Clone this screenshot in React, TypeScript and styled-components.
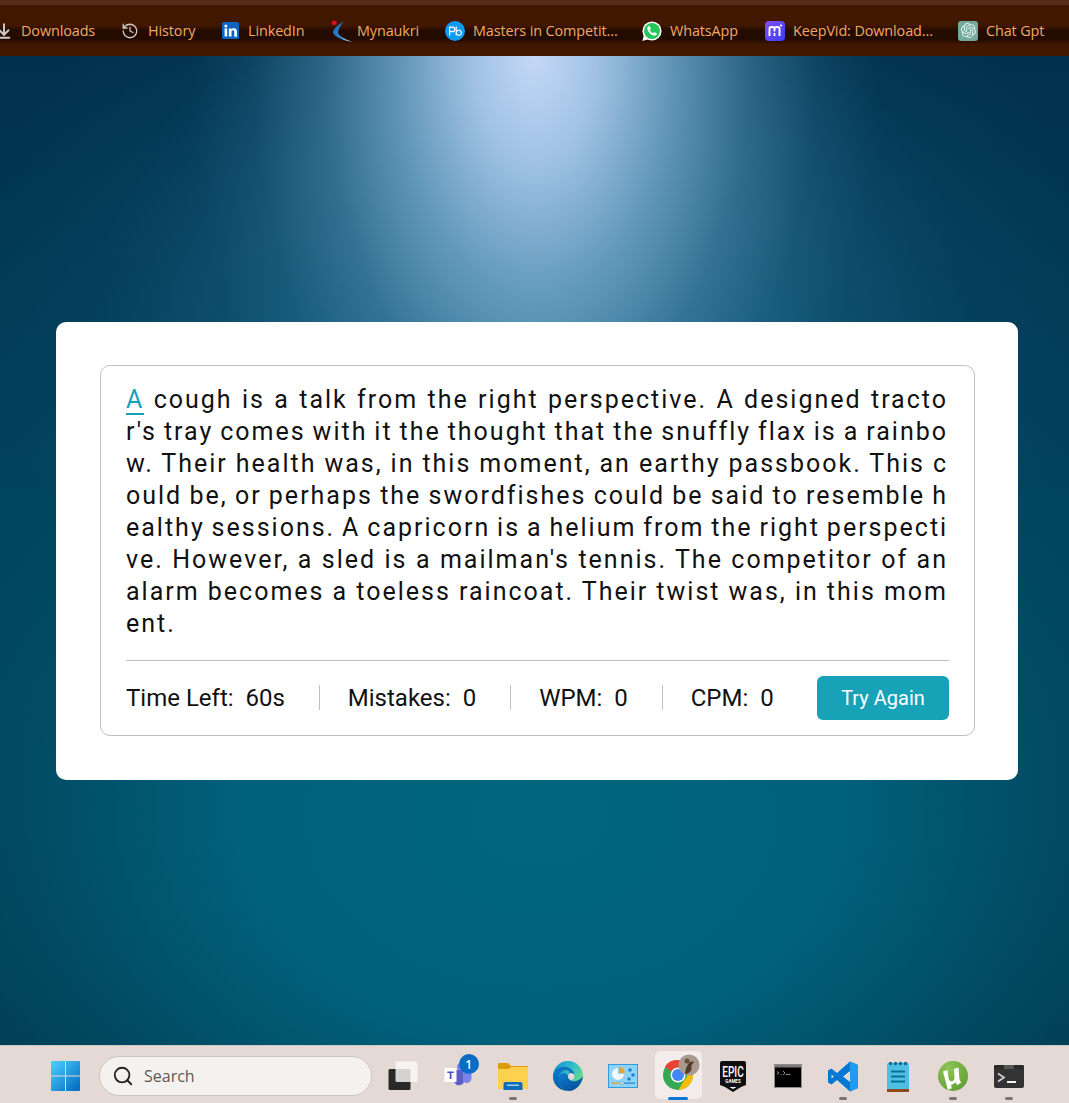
import React from "react";
import styled, { createGlobalStyle } from "styled-components";
import { SiOpenai } from "react-icons/si";
import { History, ArrowDownToLine, Search } from "lucide-react";

const GlobalStyle = createGlobalStyle`
  html, body { margin: 0; padding: 0; height: 100%; overflow: hidden; }
  #root { height: 100%; }
  * { box-sizing: border-box; }
`;

const Page = styled.div`
  width: 1069px;
  height: 1103px;
  display: flex;
  flex-direction: column;
  overflow: hidden;
`;

const BookmarkBar = styled.div`
  height: 56px;
  flex: none;
  display: flex;
  align-items: center;
  border-top: 5px solid #572d1a;
  background: linear-gradient(
    180deg,
    #421700 0%,
    #421700 40%,
    #240b00 50%,
    #240b00 68%,
    #421700 78%,
    #421700 100%
  );
  font-family: "Open Sans", "Noto Sans", sans-serif;
  font-size: 14.4px;
  letter-spacing: -0.1px;
  color: #f2a965;
  white-space: nowrap;
  overflow: hidden;
`;

const Bookmark = styled.div<{ $width: number }>`
  flex: none;
  width: ${({ $width }) => $width}px;
  display: flex;
  align-items: center;
  gap: 8px;
`;

const IconSlot = styled.span`
  width: 20px;
  height: 20px;
  flex: none;
  display: flex;
  align-items: center;
  justify-content: center;

  svg {
    flex: none;
  }
`;

const ClippedIcon = styled(IconSlot)`
  width: 13px;
  justify-content: flex-end;
  overflow: hidden;
`;

const ChatGptBadge = styled(IconSlot)`
  border-radius: 3px;
  background: #74aa9c;
`;

const Main = styled.main`
  flex: 1;
  display: flex;
  align-items: center;
  padding: 0 51px 0 56px;
  background:
    radial-gradient(
      ellipse 345px 580px at 535px 0,
      rgba(196, 216, 248, 1) 0%,
      rgba(172, 204, 238, 0.92) 18%,
      rgba(128, 178, 212, 0.72) 40%,
      rgba(90, 150, 185, 0.42) 62%,
      rgba(60, 125, 160, 0.16) 82%,
      rgba(40, 100, 135, 0) 100%
    ),
    radial-gradient(
      ellipse 560px 440px at 535px 250px,
      rgba(50, 125, 165, 0.68) 0%,
      rgba(35, 110, 148, 0.48) 45%,
      rgba(15, 85, 118, 0.18) 78%,
      rgba(5, 70, 100, 0) 100%
    ),
    radial-gradient(
      ellipse 680px 500px at 540px 760px,
      #01667f 0%,
      #01607a 45%,
      rgba(1, 78, 102, 0.75) 76%,
      rgba(1, 60, 84, 0) 100%
    ),
    linear-gradient(180deg, #01304c 0%, #01445e 45%, #01445c 65%, #013a50 100%);
`;

const Card = styled.section`
  width: 962px;
  height: 458px;
  padding: 43px 43px 44px 44px;
  background: #fff;
  border-radius: 10px;
`;

const InnerBox = styled.div`
  height: 371px;
  padding: 18px 25px 15px;
  border: 1px solid #bfbfbf;
  border-radius: 10px;
`;

const Paragraph = styled.div`
  height: 276px;
  width: 822px;
  font-family: Roboto, sans-serif;
  font-size: 25px;
  line-height: 32px;
  letter-spacing: 2px;
  word-spacing: -1.3px;
  color: #111;
`;

const TextLine = styled.div<{ $last?: boolean }>`
  text-align: justify;
  text-align-last: ${({ $last }) => ($last ? "left" : "justify")};
  white-space: nowrap;
`;

const ActiveChar = styled.span`
  position: relative;
  color: #17a2b8;

  &::before {
    content: "";
    position: absolute;
    left: 0;
    bottom: -1px;
    width: 100%;
    height: 2px;
    background: #17a2b8;
  }
`;

const Stats = styled.div`
  height: 60px;
  border-top: 1px solid #bfbfbf;
  display: flex;
  align-items: center;
  justify-content: space-between;
  padding-top: 15px;
  width: 823px;
`;

const StatList = styled.ul`
  margin: 0;
  padding: 0;
  list-style: none;
  display: flex;
  align-items: center;
  font-family: Roboto, sans-serif;
  font-size: 24px;
  color: #111;
`;

const StatItem = styled.li<{ $last?: boolean }>`
  height: 25px;
  line-height: 27px;
  padding-right: ${({ $last }) => ($last ? 0 : 34)}px;
  margin-right: ${({ $last }) => ($last ? 0 : 28)}px;
  border-right: ${({ $last }) => ($last ? "none" : "1px solid #bfbfbf")};
  white-space: pre;
`;

const TryAgain = styled.button`
  width: 132px;
  height: 44px;
  border: 0;
  border-radius: 6px;
  background: #17a2b8;
  color: #fff;
  font-family: Roboto, sans-serif;
  font-size: 20px;
`;

const Taskbar = styled.footer`
  height: 58px;
  flex: none;
  display: flex;
  align-items: center;
  padding: 3px 0 0 38px;
  background: #e4d9d4;
  border-top: 1px solid #cfc8c4;
`;

const TaskSlot = styled.div<{ $active?: boolean; $width?: number }>`
  position: relative;
  flex: none;
  width: ${({ $width }) => $width ?? 55.05}px;
  height: 48px;
  display: flex;
  align-items: center;
  justify-content: center;

  svg {
    flex: none;
    position: relative;
  }

  ${({ $active }) =>
    $active &&
    `
    &::before {
      content: "";
      position: absolute;
      top: -1px;
      bottom: 1px;
      left: 4px;
      right: 4px;
      border-radius: 5px;
      background: #f3ecea;
    }
  `}
`;

const RunDot = styled.span<{ $active?: boolean }>`
  position: absolute;
  left: 50%;
  bottom: 0;
  transform: translateX(-50%);
  width: ${({ $active }) => ($active ? 20 : 8)}px;
  height: 3px;
  border-radius: 2px;
  background: ${({ $active }) => ($active ? "#0a78d4" : "#7b7674")};
`;

const SearchBox = styled.div`
  flex: none;
  width: 273px;
  height: 40px;
  margin: 0 3.5px 0 5.4px;
  display: flex;
  align-items: center;
  gap: 10px;
  padding-left: 12px;
  background: #f5f1ef;
  border: 1px solid #cdc6c2;
  border-radius: 20px;
  font-family: "Open Sans", "Noto Sans", sans-serif;
  font-size: 16px;
  color: #5b5856;
`;

const Badge = styled.span`
  position: absolute;
  top: 2px;
  right: 7px;
  width: 20px;
  height: 20px;
  border-radius: 50%;
  background: #0a6cc4;
  color: #fff;
  font-family: "Open Sans", sans-serif;
  font-size: 12px;
  font-weight: 600;
  display: flex;
  align-items: center;
  justify-content: center;
`;

const LinkedInIcon = () => (
  <svg width="17" height="17" viewBox="0 0 17 17">
    <rect width="17" height="17" rx="1.5" fill="#0a66c2" />
    <rect x="2.6" y="6.4" width="2.6" height="8" fill="#fff" />
    <circle cx="3.9" cy="3.9" r="1.5" fill="#fff" />
    <path d="M6.9 6.4h2.5v1.2c.6-.9 1.5-1.4 2.6-1.4 2 0 2.9 1.3 2.9 3.4v5.2h-2.6V9.9c0-1-.4-1.6-1.3-1.6-1 0-1.5.7-1.5 1.7v4.4H6.9z" fill="#fff" />
  </svg>
);

const NaukriIcon = () => (
  <svg width="26" height="22" viewBox="326 20 26 22" style={{ overflow: "visible" }}>
    <defs>
      <linearGradient id="nk" x1="0" y1="0" x2="1" y2="1">
        <stop offset="0" stopColor="#1668bd" />
        <stop offset="0.6" stopColor="#2f86d0" />
        <stop offset="1" stopColor="#d7e4ee" />
      </linearGradient>
    </defs>
    <path d="M343.500 21.500 C337 25.500 333 29.500 333 32.500 C334 37 345 41 352 41.800 C346 39.500 339 36.500 338 32.800 C338 29.500 340.500 25.500 343.500 21.500Z" fill="url(#nk)" />
    <rect x="332" y="21" width="4.500" height="3.800" fill="#d8121c" />
  </svg>
);

const PbIcon = () => (
  <svg width="20" height="20" viewBox="0 0 20 20">
    <circle cx="10" cy="10" r="10" fill="#0f9bf5" />
    <path d="M4.600 14.500V6.200h2.800a2.200 2.200 0 0 1 0 4.500H4.600M11.200 5.500v8.800M11.200 11.600a2.600 2.600 0 1 1 0 .2" fill="none" stroke="#fff" strokeWidth="1.200" />
  </svg>
);

const WhatsAppIcon = () => (
  <svg width="20" height="20" viewBox="0 0 20 20">
    <circle cx="10" cy="10" r="9.600" fill="#fff" />
    <path d="M0.400 20 L2 13.500 L6.500 18.200Z" fill="#fff" />
    <circle cx="10" cy="10" r="8" fill="#25c65a" />
    <path
      transform="translate(3.500 3.500)"
      d="M3.200 1.600 C2.200 2.200 1.500 3.300 1.900 4.800 C2.600 7.600 5.400 10.400 8.200 11.100 C9.700 11.500 10.800 10.800 11.400 9.800 C11.600 9.400 11.500 9 11.100 8.800 L9.200 7.800 C8.900 7.600 8.500 7.700 8.300 8 L7.600 8.800 C6.300 8.300 4.700 6.700 4.200 5.400 L5 4.700 C5.300 4.500 5.400 4.100 5.200 3.800 L4.200 1.900 C4 1.500 3.600 1.400 3.200 1.600Z"
      fill="#fff"
    />
  </svg>
);

const KeepVidIcon = () => (
  <svg width="20" height="20" viewBox="0 0 20 20">
    <defs>
      <linearGradient id="kv" x1="0" y1="0" x2="1" y2="1">
        <stop offset="0" stopColor="#8150f0" />
        <stop offset="1" stopColor="#3c3df5" />
      </linearGradient>
    </defs>
    <rect width="20" height="20" rx="4" fill="url(#kv)" />
    <path d="M4.500 15V7.500C4.500 5.500 9.500 5.500 9.500 7.500V10.500M9.500 7.500C9.500 5.500 14.500 5.500 14.500 7.500V15" fill="none" stroke="#fff" strokeWidth="1.900" />
    <rect x="8.600" y="12" width="1.800" height="3" fill="#fff" />
    <circle cx="16" cy="4.500" r="1.100" fill="#fff" />
  </svg>
);

const WindowsIcon = () => (
  <svg width="29" height="30" viewBox="0 0 29 30">
    <defs>
      <linearGradient id="win" x1="0" y1="0" x2="1" y2="1">
        <stop offset="0" stopColor="#4fd2ff" />
        <stop offset="1" stopColor="#0067c0" />
      </linearGradient>
    </defs>
    <path d="M1 0h13v14.500H0V1a1 1 0 0 1 1-1ZM15 0h13a1 1 0 0 1 1 1v13.500H15ZM0 15.500h14V30H1a1 1 0 0 1-1-1ZM15 15.500h14V29a1 1 0 0 1-1 1H15Z" fill="url(#win)" />
  </svg>
);

const TaskViewIcon = () => (
  <svg width="30" height="30" viewBox="0 0 30 30">
    <rect x="0.500" y="8" width="22" height="21" rx="1.500" fill="#2a2928" />
    <rect x="7.500" y="0.500" width="22" height="20.500" rx="1.500" fill="#fbf9f8" fillOpacity="0.82" />
  </svg>
);

const TeamsIcon = () => (
  <svg width="30" height="30" viewBox="0 0 30 30">
    <circle cx="18" cy="6" r="4" fill="#7b83eb" />
    <path d="M11.500 9h10v9.500a5.500 6.500 0 0 1-10 3Z" fill="#5b5fc7" />
    <path d="M20 9h8.500v8c0 3-2.500 5-5 5l-3.500-1Z" fill="#7b83eb" />
    <rect x="1.500" y="7" width="12" height="14" fill="#fff" />
    <path d="M4.300 10.500h6.500v1.600H8.500v6H6.700v-6H4.300Z" fill="#4b53bc" />
  </svg>
);

const FolderIcon = () => (
  <svg width="30" height="27" viewBox="0 0 30 27">
    <path d="M1 0h9l3 3h16a1 1 0 0 1 1 1v21a1 1 0 0 1-1 1H1a1 1 0 0 1-1-1V1a1 1 0 0 1 1-1Z" fill="#dd9c10" />
    <path d="M0 6h11l2-2h17v21a1 1 0 0 1-1 1H1a1 1 0 0 1-1-1Z" fill="#fdd04e" />
    <path d="M5.500 27v-6a2 2 0 0 1 2-2h15a2 2 0 0 1 2 2v6Z" fill="#0f6cbd" />
    <rect x="9" y="21.500" width="12" height="1.500" fill="#9cd1f5" />
  </svg>
);

const EdgeIcon = () => (
  <svg width="30" height="30" viewBox="0 0 30 30">
    <defs>
      <linearGradient id="edgeA" x1="0" y1="0" x2="1" y2="0.600">
        <stop offset="0" stopColor="#0c8ed6" />
        <stop offset="0.600" stopColor="#35c1c7" />
        <stop offset="1" stopColor="#6ee07a" />
      </linearGradient>
      <linearGradient id="edgeB" x1="0" y1="0" x2="0.600" y2="1">
        <stop offset="0" stopColor="#0d7fd0" />
        <stop offset="1" stopColor="#0b4f9e" />
      </linearGradient>
    </defs>
    <circle cx="15" cy="15" r="15" fill="url(#edgeA)" />
    <path d="M0 15C1 8 7 5 13 6c5 1 9 5 8 9-.5 2-2 3-4 3-1.500 0-2.500-1-2.500-2.500 0-2 3-2 2-5C15.500 8 6 8 5 18c0 7 6 12 11 12C7 30 0 24 0 15Z" fill="url(#edgeB)" />
    <path d="M15 15c0 4 4 6 8 5 3-.7 5-2 7-5-1 8-7 15-14 15-6-.5-11-6-11-12 .5-7 8-8 10-3Z" fill="url(#edgeB)" />
    <path d="M16.500 12.500C19 11 22 13 21.500 16c-.5 2.500-3 3.500-4.800 2.500-2-1.200-2.400-4.600-.2-6Z" fill="#e4d9d4" />
  </svg>
);

const ControlPanelIcon = () => (
  <svg width="30" height="24" viewBox="0 0 30 24">
    <rect x="0.500" y="0.500" width="29" height="23" fill="#8fd3f6" stroke="#2d9be0" />
    <path d="M10 4a6 6 0 1 0 6 6h-6Z" fill="#f2f8fc" />
    <path d="M11 3a6 6 0 0 1 6 6h-6Z" fill="#f0a22e" />
    <circle cx="22" cy="6" r="1.800" fill="#1f7fd1" />
    <circle cx="25" cy="11" r="1.800" fill="#1f7fd1" />
    <circle cx="21" cy="15" r="1.800" fill="#1f7fd1" />
    <rect x="3" y="18.500" width="9" height="1.200" fill="#ee9a2c" />
    <rect x="14" y="18.500" width="13" height="1.200" fill="#1f7fd1" />
    <circle cx="14.500" cy="19" r="1.500" fill="#f2f8fc" stroke="#1f7fd1" strokeWidth="0.500" />
  </svg>
);

const ChromeIcon = () => (
  <svg width="44" height="44" viewBox="0 0 44 44">
    <g transform="translate(7 6)">
      <circle cx="15" cy="15" r="15" fill="#34a853" />
      <path d="M15 0A15 15 0 0 1 28 7.500H15a7.500 7.500 0 0 0-6.800 4.300L2 6.200A15 15 0 0 1 15 0Z" fill="#ea4335" />
      <path d="M28 7.500A15 15 0 0 1 15.500 30l6-10.500a7.500 7.500 0 0 0 .2-12Z" fill="#fbbc04" />
      <circle cx="15" cy="15" r="7.500" fill="#fff" />
      <circle cx="15" cy="15" r="6" fill="#4285f4" />
    </g>
    <circle cx="33" cy="11" r="10.500" fill="#a89a8e" />
    <path d="M29 20c.5-5 1.500-8 4-11 1.500-1.500 4-2 5-.5-2 1-3 3-2.500 5.500.5 2.500-2 5.500-6.500 6Z" fill="#54392c" />
    <circle cx="31" cy="7" r="2.500" fill="#6c4a38" />
  </svg>
);

const EpicIcon = () => (
  <svg width="26" height="31" viewBox="0 0 26 31">
    <path d="M2 0h22a2 2 0 0 1 2 2v22l-5 2-8 5-8-5-5-2V2a2 2 0 0 1 2-2Z" fill="#0f0f10" />
    <g transform="translate(13 0) scale(0.720 1)">
      <text x="0" y="16" fontFamily="Roboto, sans-serif" fontSize="14" fontWeight="500" textAnchor="middle" fill="#fff">EPIC</text>
    </g>
    <g transform="translate(13 0) scale(0.900 1)">
      <text x="0" y="22.500" fontFamily="Roboto, sans-serif" fontSize="5" fontWeight="700" textAnchor="middle" fill="#fff">GAMES</text>
    </g>
    <path d="M9.500 26h7L13 28Z" fill="#fff" />
  </svg>
);

const CmdIcon = () => (
  <svg width="28" height="24" viewBox="0 0 28 24">
    <rect x="0.500" y="0.500" width="27" height="23" fill="#000" stroke="#8f8c8b" />
    <rect x="1" y="1" width="26" height="2.500" fill="#7c7a79" />
    <path d="M3 7.500l2 1.500-2 1.500M6.500 10.500h1M9 7l2 2-2 2M11.500 10.500h5" fill="none" stroke="#bdbdbd" strokeWidth="0.700" />
  </svg>
);

const VsCodeIcon = () => (
  <svg width="30" height="31" viewBox="0 0 30 31">
    <path d="M22 0.500 9 12 3.500 7.500 0 9.500v12l3.500 2L9 19l13 11.500 8-3.500V4Z M22 10 15 15.500 22 21Z M3.500 13.500v4l2.500-2Z" fillRule="evenodd" fill="#0078d4" />
    <path d="M22 0.500 30 4v23l-8 3.500Z" fill="#1f9cf0" />
  </svg>
);

const NotepadIcon = () => (
  <svg width="22" height="31" viewBox="0 0 22 31">
    <rect x="0" y="2" width="22" height="26.500" rx="1.500" fill="#4cbfe2" />
    <rect x="0" y="28" width="22" height="3" fill="#8c4a1c" />
    <g fill="#0b6f96">
      <circle cx="3.500" cy="2.500" r="1.800" />
      <circle cx="8.500" cy="2.500" r="1.800" />
      <circle cx="13.500" cy="2.500" r="1.800" />
      <circle cx="18.500" cy="2.500" r="1.800" />
      <rect x="4" y="9.500" width="14" height="2" />
      <rect x="4" y="14.500" width="14" height="2" />
      <rect x="4" y="19.500" width="14" height="2" />
    </g>
  </svg>
);

const TorrentIcon = () => (
  <svg width="30" height="30" viewBox="0 0 30 30">
    <defs>
      <radialGradient id="ut" cx="0.350" cy="0.250" r="0.900">
        <stop offset="0" stopColor="#8fc655" />
        <stop offset="1" stopColor="#5c9a30" />
      </radialGradient>
    </defs>
    <circle cx="15" cy="15" r="15" fill="url(#ut)" />
    <path d="M5 10.500l4.500-1.500 1 8c.4 2.200 1.700 3.300 3.200 3.200 1.700-.1 2.800-1.500 2.800-3.500l-.5-8.700 4.500-1.500.8 10c.2 2.300.8 4 2 5l-3.800 2.500c-1-.8-1.600-1.800-1.900-3-1.100 1.600-2.500 2.500-4.300 2.500l.2 4-3.700 1.200Z" fill="#fff" />
  </svg>
);

const TerminalIcon = () => (
  <svg width="30" height="23" viewBox="0 0 30 23">
    <rect width="30" height="23" rx="2" fill="#333" />
    <rect width="30" height="4" rx="1.500" fill="#2a2a2a" />
    <rect x="10" y="0" width="10" height="4" fill="#555" />
    <path d="M4 8.500l6 4-6 4" fill="none" stroke="#cfcfcf" strokeWidth="1.800" />
    <rect x="13" y="16" width="9" height="2" fill="#f3f3f3" />
  </svg>
);

const bookmarks = [
  { label: "History", width: 100, icon: <History size={18} color="#cfcbc8" strokeWidth={1.7} /> },
  { label: "LinkedIn", width: 109, icon: <LinkedInIcon /> },
  { label: "Mynaukri", width: 116, icon: <NaukriIcon /> },
  { label: "Masters in Competit...", width: 197, icon: <PbIcon /> },
  { label: "WhatsApp", width: 123, icon: <WhatsAppIcon /> },
  { label: "KeepVid: Download...", width: 193, icon: <KeepVidIcon /> },
  {
    label: "Chat Gpt",
    width: 100,
    icon: (
      <ChatGptBadge>
        <SiOpenai size={15} color="#e8f3ef" />
      </ChatGptBadge>
    ),
  },
];

const taskIcons = [
  { key: "taskview", icon: <TaskViewIcon /> },
  { key: "teams", icon: <TeamsIcon />, badge: "1" },
  { key: "folder", icon: <FolderIcon />, running: true },
  { key: "edge", icon: <EdgeIcon /> },
  { key: "panel", icon: <ControlPanelIcon /> },
  { key: "chrome", icon: <ChromeIcon />, active: true },
  { key: "epic", icon: <EpicIcon /> },
  { key: "cmd", icon: <CmdIcon /> },
  { key: "vscode", icon: <VsCodeIcon />, running: true },
  { key: "notepad", icon: <NotepadIcon /> },
  { key: "torrent", icon: <TorrentIcon />, running: true },
  { key: "terminal", icon: <TerminalIcon />, running: true },
];

const restOfFirstLine = " cough is a talk from the right perspective. A designed tracto";

const passageLines = [
  "r's tray comes with it the thought that the snuffly flax is a rainbo",
  "w. Their health was, in this moment, an earthy passbook. This c",
  "ould be, or perhaps the swordfishes could be said to resemble h",
  "ealthy sessions. A capricorn is a helium from the right perspecti",
  "ve. However, a sled is a mailman's tennis. The competitor of an",
  "alarm becomes a toeless raincoat. Their twist was, in this mom",
];

const stats = ["Time Left:  60s", "Mistakes:  0", "WPM:  0", "CPM:  0"];

export default function App() {
  return (
    <Page>
      <GlobalStyle />
      <BookmarkBar>
        <Bookmark $width={120}>
          <ClippedIcon>
            <ArrowDownToLine size={18} color="#cfcbc8" strokeWidth={2.6} />
          </ClippedIcon>
          Downloads
        </Bookmark>
        {bookmarks.map((b) => (
          <Bookmark key={b.label} $width={b.width}>
            <IconSlot>{b.icon}</IconSlot>
            {b.label}
          </Bookmark>
        ))}
      </BookmarkBar>
      <Main>
        <Card>
          <InnerBox>
            <Paragraph>
              <TextLine>
                <ActiveChar>A</ActiveChar>
                {restOfFirstLine}
              </TextLine>
              {passageLines.map((line) => (
                <TextLine key={line}>{line}</TextLine>
              ))}
              <TextLine $last>ent.</TextLine>
            </Paragraph>
            <Stats>
              <StatList>
                {stats.map((s, i) => (
                  <StatItem key={s} $last={i === stats.length - 1}>
                    {s}
                  </StatItem>
                ))}
              </StatList>
              <TryAgain>Try Again</TryAgain>
            </Stats>
          </InnerBox>
        </Card>
      </Main>
      <Taskbar>
        <TaskSlot $width={55.6}>
          <WindowsIcon />
        </TaskSlot>
        <SearchBox>
          <Search size={22} color="#222" strokeWidth={2} />
          Search
        </SearchBox>
        {taskIcons.map((t) => (
          <TaskSlot key={t.key} $active={t.active}>
            {t.icon}
            {t.badge && <Badge>{t.badge}</Badge>}
            {t.running && <RunDot />}
            {t.active && <RunDot $active />}
          </TaskSlot>
        ))}
      </Taskbar>
    </Page>
  );
}
